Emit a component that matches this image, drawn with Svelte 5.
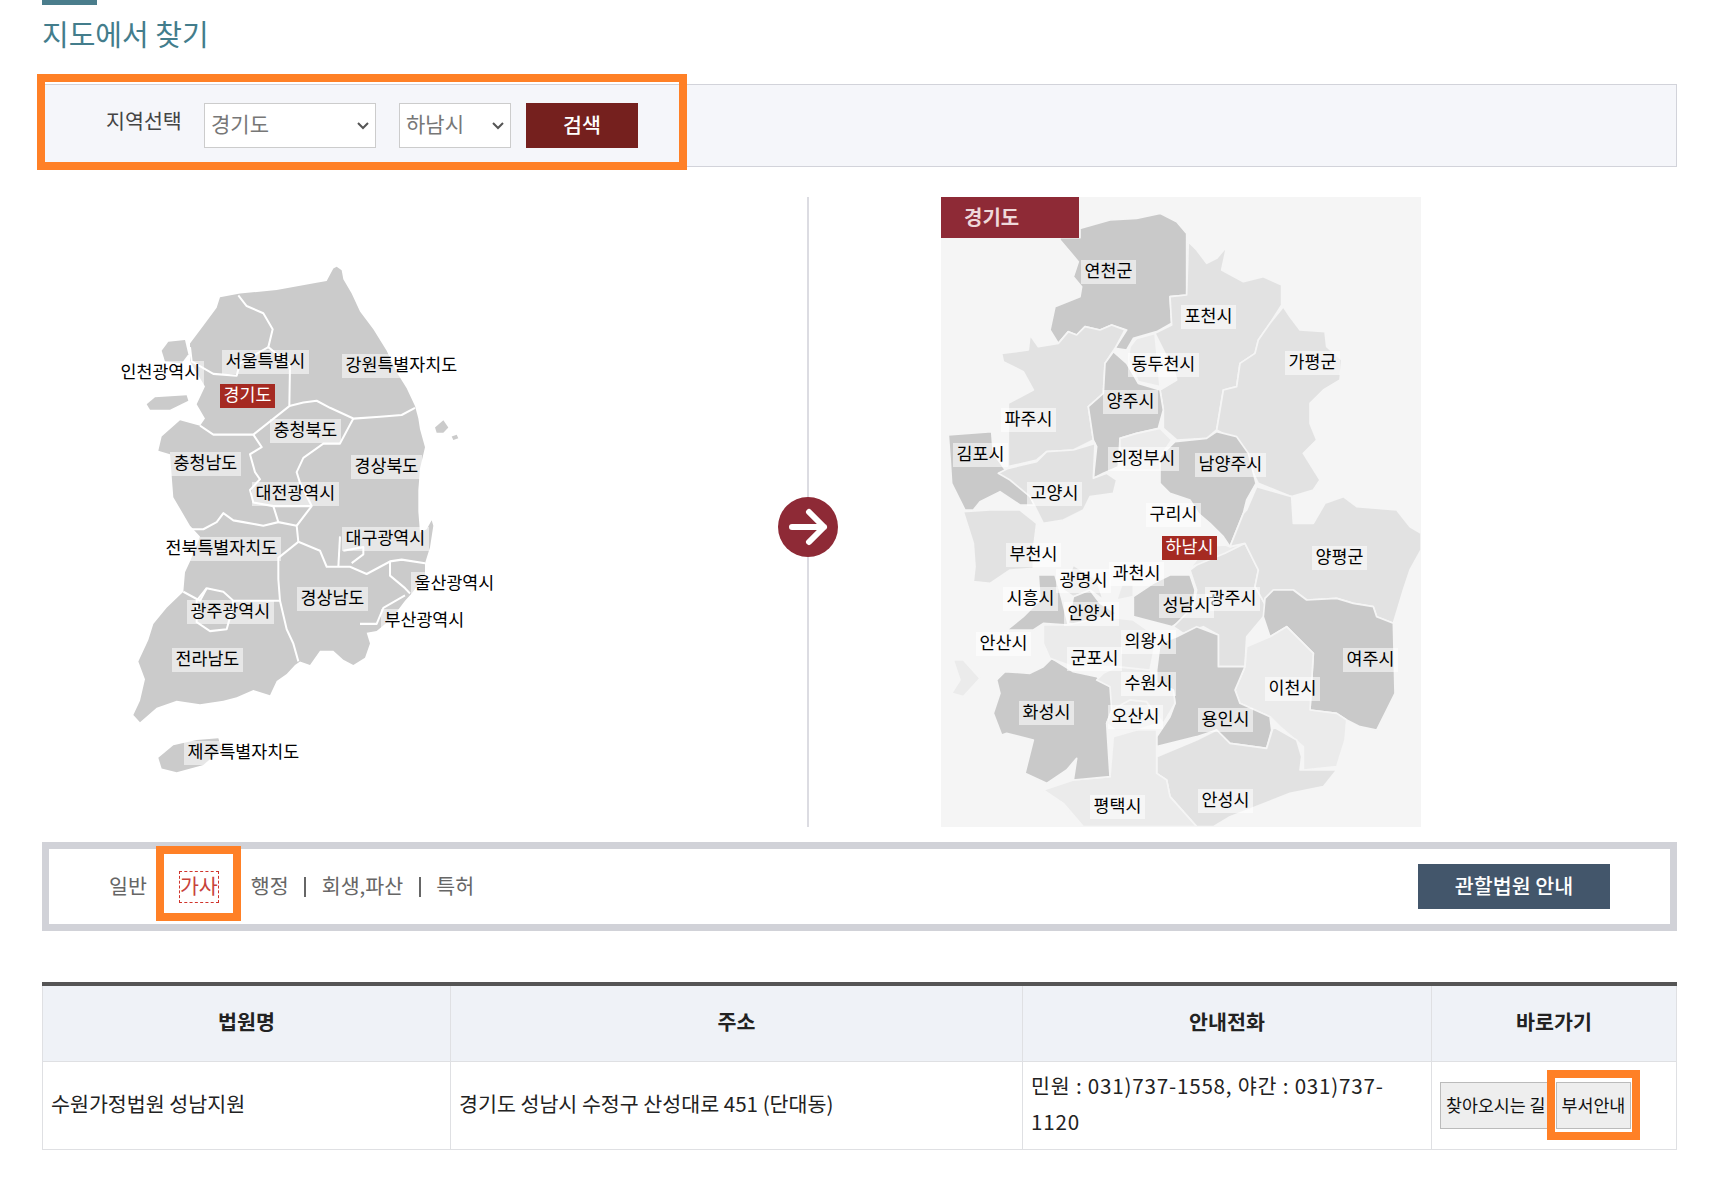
<script>
  const sido = [
    { name: '인천광역시', x: 117, y: 361 },
    { name: '서울특별시', x: 222, y: 350 },
    { name: '강원특별자치도', x: 342, y: 354 },
    { name: '경기도', x: 220, y: 384, on: true },
    { name: '충청북도', x: 270, y: 419 },
    { name: '충청남도', x: 170, y: 452 },
    { name: '경상북도', x: 351, y: 455 },
    { name: '대전광역시', x: 252, y: 482 },
    { name: '대구광역시', x: 342, y: 527 },
    { name: '전북특별자치도', x: 162, y: 537 },
    { name: '울산광역시', x: 411, y: 572 },
    { name: '경상남도', x: 297, y: 587 },
    { name: '광주광역시', x: 187, y: 600 },
    { name: '부산광역시', x: 381, y: 609 },
    { name: '전라남도', x: 172, y: 648 },
    { name: '제주특별자치도', x: 184, y: 741 }
  ]

  const sigungu = [
    { name: '연천군', x: 1081, y: 260 },
    { name: '포천시', x: 1181, y: 305 },
    { name: '동두천시', x: 1128, y: 353 },
    { name: '가평군', x: 1285, y: 351 },
    { name: '양주시', x: 1103, y: 390 },
    { name: '파주시', x: 1001, y: 408 },
    { name: '김포시', x: 953, y: 443 },
    { name: '의정부시', x: 1108, y: 447 },
    { name: '남양주시', x: 1195, y: 453 },
    { name: '고양시', x: 1027, y: 482 },
    { name: '구리시', x: 1146, y: 503 },
    { name: '하남시', x: 1162, y: 536, on: true },
    { name: '부천시', x: 1006, y: 543 },
    { name: '양평군', x: 1312, y: 546 },
    { name: '과천시', x: 1109, y: 562 },
    { name: '광명시', x: 1056, y: 569 },
    { name: '시흥시', x: 1003, y: 587 },
    { name: '광주시', x: 1205, y: 587 },
    { name: '성남시', x: 1159, y: 594 },
    { name: '안양시', x: 1064, y: 602 },
    { name: '안산시', x: 976, y: 632 },
    { name: '의왕시', x: 1121, y: 630 },
    { name: '군포시', x: 1067, y: 647 },
    { name: '여주시', x: 1343, y: 648 },
    { name: '수원시', x: 1121, y: 672 },
    { name: '이천시', x: 1265, y: 677 },
    { name: '화성시', x: 1019, y: 701 },
    { name: '오산시', x: 1108, y: 705 },
    { name: '용인시', x: 1198, y: 708 },
    { name: '평택시', x: 1090, y: 795 },
    { name: '안성시', x: 1198, y: 789 }
  ]

  const dark = '#c9c9c9'
  const mid = '#e2e2e2'
  const soft = '#ebebeb'

  // traced by eye from the reference, y of the lower half offset by 960
  const upper = [
    { fill: dark, p: '390,143 450,143 450,115 540,90 620,85 690,70 740,95 770,130 770,315 720,320 725,400 680,425 610,445 590,480 555,475 590,420 545,405 510,420 465,410 440,435 415,425 385,460 360,420 375,350 450,320 455,290 430,260 445,215 390,150' },
    { fill: mid, p: '775,155 800,180 830,220 860,205 890,170 875,240 940,275 1000,260 1055,285 1055,345 1020,400 985,450 975,490 930,520 920,590 880,600 860,720 830,745 740,750 700,715 700,660 690,600 740,570 735,550 675,430 725,405 720,320 770,315' },
    { fill: soft, p: '600,470 620,445 675,430 690,590 625,575 595,510' },
    { fill: mid, p: '1060,350 1080,380 1110,420 1185,425 1190,470 1235,510 1230,570 1180,600 1140,640 1140,700 1160,750 1120,790 1170,870 1150,900 1085,920 985,880 960,830 930,760 860,720 880,600 920,590 930,520 975,490 985,450 1020,400' },
    { fill: mid, p: '215,490 295,480 300,435 325,470 385,460 415,425 440,435 465,410 510,420 545,405 585,420 555,475 525,520 520,610 475,650 490,750 430,780 350,785 320,810 235,830 235,640 310,600 280,545 220,515' },
    { fill: dark, p: '550,485 590,520 625,580 690,600 700,660 685,715 620,730 570,745 565,830 520,850 490,865 500,770 490,750 475,650 520,610 525,520' },
    { fill: soft, p: '570,745 620,730 690,715 725,750 690,800 690,840 580,840 570,800' },
    { fill: dark, p: '735,755 830,745 860,725 920,740 955,790 978,880 950,930 940,970 900,1070 880,1040 840,1000 805,970 780,930 720,910 690,880 690,800' },
    { fill: dark, p: '55,735 185,725 190,790 230,845 300,900 330,945 270,945 210,905 150,935 130,960 105,960 65,880 60,800' },
    { fill: mid, p: '205,850 235,835 320,815 350,785 430,780 495,760 490,865 530,850 560,870 550,910 480,920 460,960 400,990 340,1000 300,920 240,870' }
  ]

  const lower = [
    { fill: mid, p: '100,5 180,0 270,0 320,40 310,120 310,175 240,180 180,220 130,215 135,170 130,100' },
    { fill: dark, p: '230,360 280,320 330,270 325,195 375,195 395,265 415,345 340,340 310,360' },
    { fill: mid, p: '400,240 430,165 500,210 520,270 480,240 430,260' },
    { fill: dark, p: '430,260 480,240 510,280 560,310 480,350 450,345 415,340' },
    { fill: soft, p: '575,225 610,225 610,260 560,270' },
    { fill: dark, p: '610,260 670,220 720,195 780,195 795,240 790,280 760,330 725,350 610,320' },
    { fill: soft, p: '780,175 830,110 885,105 900,110 945,100 985,180 975,230 900,170 800,165' },
    { fill: mid, p: '800,240 780,180 800,165 885,130 945,100 985,180 975,230 1015,300 1000,320 950,380 945,470 865,470 865,375 820,350 760,370 730,350 790,290' },
    { fill: mid, p: '950,0 980,-70 1085,-40 1090,40 1150,40 1185,-20 1240,-40 1280,-10 1400,0 1440,50 1473,70 1473,120 1440,180 1420,240 1390,340 1340,320 1330,290 1270,280 1220,265 1130,270 1090,240 1030,240 1005,265 1015,300 975,230 985,180 945,100 900,110 940,10' },
    { fill: dark, p: '1005,265 1030,240 1090,240 1130,270 1220,265 1270,280 1330,290 1340,320 1390,340 1395,550 1370,600 1340,660 1290,650 1250,630 1220,610 1140,600 1150,430 1090,370 1070,350 1020,380 1000,320' },
    { fill: soft, p: '950,410 1020,380 1070,350 1090,370 1150,430 1140,600 1220,610 1250,630 1245,690 1220,770 1120,780 1120,710 1050,650 1020,620 930,580 915,540 945,470' },
    { fill: dark, p: '680,480 690,400 740,380 800,350 865,375 865,470 945,470 915,540 930,580 1020,620 1025,660 1010,715 900,700 860,660 800,680 680,710 680,680 720,620 735,580 730,540 680,520' },
    { fill: mid, p: '680,740 800,690 860,660 900,700 1010,715 1030,650 1100,690 1115,740 1110,780 1220,780 1180,830 1080,850 900,920 850,950 800,950 720,860 710,810 680,790' },
    { fill: soft, p: '550,680 620,660 680,660 680,790 710,810 720,860 800,950 460,950 400,880 340,840 430,810 540,800' },
    { fill: dark, p: '200,510 225,485 300,490 340,470 365,445 430,485 500,500 540,530 620,540 665,560 600,570 545,600 530,640 540,800 430,810 440,745 410,780 350,820 285,790 310,690 230,670 215,675 190,610 210,550' },
    { fill: soft, p: '555,580 600,570 650,575 685,640 620,660 555,660 530,640' },
    { fill: soft, p: '660,480 680,520 730,540 735,580 700,640 650,575 600,570 545,600 540,530 500,510 520,490 560,470' },
    { fill: soft, p: '340,345 415,345 520,320 610,330 680,380 660,480 560,470 430,470 360,445 340,400' },
    { fill: soft, p: '70,450 100,450 150,505 100,560 65,550 90,510' }
  ]

  const mainland = '740,75 755,85 760,110 785,150 810,200 850,250 890,310 920,370 950,415 975,465 985,500 990,530 1005,580 990,640 985,700 985,760 990,820 1010,810 1025,785 1030,800 1020,860 1005,905 1005,940 965,990 945,1010 905,1060 860,1095 830,1100 840,1130 825,1170 790,1190 760,1175 730,1150 690,1150 660,1190 630,1180 615,1190 590,1215 560,1235 540,1275 490,1260 440,1280 400,1290 330,1300 260,1290 200,1310 150,1350 130,1330 150,1290 165,1230 145,1180 175,1120 190,1075 230,1030 280,985 285,930 300,900 330,830 300,800 250,720 245,660 240,600 205,590 215,550 270,505 330,520 345,500 320,460 345,410 300,340 300,290 340,240 380,190 390,160 450,150 560,140 680,120 710,115 730,80'

  const islands = [
    '215,310 235,285 285,280 295,320 275,345 225,340',
    '170,460 195,440 290,435 295,450 240,475 180,475',
    '1035,525 1060,505 1075,525 1060,540 1040,540',
    '1085,550 1100,545 1105,555 1090,560',
    '205,1450 250,1415 320,1400 385,1395 395,1425 340,1470 260,1490 215,1480'
  ]

  const borders = [
    '445,155 470,185 520,205 548,250 535,300 600,350 598,465 490,545 420,545 370,545 330,520',
    '598,465 640,455 680,450 720,470 790,500 870,495 935,490 975,470',
    '790,500 750,570 700,570 640,610 620,650 630,680 665,745 620,800 625,845',
    '490,545 515,580 480,600 495,650 510,670 480,700 490,735 550,745 665,745',
    '550,745 565,790 620,800',
    '565,790 520,800 460,790 430,785 400,765 380,790 340,810 300,810',
    '625,845 565,890 565,950 570,1010 590,1090 610,1130 625,1180',
    '625,845 690,870 710,915 780,915 830,935 900,900 935,895 1005,905',
    '750,830 745,915',
    '760,870 820,860 820,880 785,905',
    '900,900 900,940 945,975 960,990',
    '945,995 880,1030 860,1075 810,1075',
    '280,985 330,1010 350,975 400,985 430,1010 520,1010 570,1010',
    '350,975 320,1010 320,1070 360,1095 410,1090 425,1040 430,1010',
    '300,300 305,340 370,375 440,380 450,345 535,300'
  ]

  let sido1 = $state('경기도')
  let sigungu1 = $state('하남시')
</script>

<div class="page">
  <div class="heading">
    <h2>지도에서 찾기</h2>
  </div>

  <div class="filter">
    <span class="filter-label">지역선택</span>
    <select class="sel-sido" bind:value={sido1}>
      <option>서울특별시</option>
      <option>경기도</option>
      <option>강원특별자치도</option>
    </select>
    <select class="sel-sigungu" bind:value={sigungu1}>
      <option>성남시</option>
      <option>하남시</option>
      <option>수원시</option>
    </select>
    <button class="search">검색</button>
    <span class="mark mark-filter"></span>
  </div>

  <div class="maps">
    <div class="left-col">
      <div class="korea">
        <svg viewBox="0 0 1350 1568" preserveAspectRatio="none" aria-hidden="true">
          <polygon points={mainland} fill="#cbcbcb" />
          {#each islands as p}
            <polygon points={p} fill="#cbcbcb" />
          {/each}
          {#each borders as p}
            <polyline points={p} fill="none" stroke="#fff" stroke-width="6" stroke-linejoin="round" />
          {/each}
        </svg>
        {#each sido as s}
          <span class="pin" class:on={s.on} style="left:{s.x - 90}px;top:{s.y - 240}px">{s.name}</span>
        {/each}
      </div>
    </div>

    <div class="divider">
      <svg class="arrow" viewBox="0 0 60 60" aria-hidden="true">
        <circle cx="30" cy="30" r="30" fill="#8e2a36" />
        <path d="M14 30H46M31 15L46 30L31 45" fill="none" stroke="#fff" stroke-width="6" stroke-linecap="round" stroke-linejoin="round" />
      </svg>
    </div>

    <div class="province">
      <svg viewBox="33 21 1440 1890" preserveAspectRatio="none" aria-hidden="true">
        {#each upper as r}
          <polygon points={r.p} fill={r.fill} stroke="#f5f5f5" stroke-width="5" stroke-linejoin="round" />
        {/each}
        <g transform="translate(0 960)">
          {#each lower as r}
            <polygon points={r.p} fill={r.fill} stroke="#f5f5f5" stroke-width="5" stroke-linejoin="round" />
          {/each}
        </g>
      </svg>
      <div class="province-title">경기도</div>
      {#each sigungu as s}
        <span class="pin" class:on={s.on} style="left:{s.x - 941}px;top:{s.y - 197}px">{s.name}</span>
      {/each}
    </div>
  </div>

  <div class="tabs">
    <a href="#일반">일반</a>
    <i></i>
    <span class="tab-current">
      <a href="#가사" class="focused">가사</a>
      <span class="mark mark-tab"></span>
    </span>
    <i></i>
    <a href="#행정">행정</a>
    <i></i>
    <a href="#회생">회생,파산</a>
    <i></i>
    <a href="#특허">특허</a>
    <button class="guide">관할법원 안내</button>
  </div>

  <table>
    <colgroup>
      <col style="width:408px" />
      <col style="width:572px" />
      <col style="width:409px" />
      <col />
    </colgroup>
    <thead>
      <tr>
        <th>법원명</th>
        <th>주소</th>
        <th>안내전화</th>
        <th>바로가기</th>
      </tr>
    </thead>
    <tbody>
      <tr>
        <td>수원가정법원 성남지원</td>
        <td>경기도 성남시 수정구 산성대로 451 (단대동)</td>
        <td class="phone">민원 : 031)737-1558, 야간 : 031)737-<br />1120</td>
        <td>
          <div class="links">
            <button>찾아오시는 길</button>
            <span class="link-current">
              <button>부서안내</button>
              <span class="mark mark-link"></span>
            </span>
          </div>
        </td>
      </tr>
    </tbody>
  </table>
</div>

<style>
  :global(body) {
    margin: 0;
    background: #fff;
    font-family: 'Noto Sans CJK KR', 'Noto Sans', sans-serif;
  }

  .page {
    width: 1635px;
    margin-left: 42px;
    height: 1186px;
  }

  .heading::before {
    content: '';
    display: block;
    width: 55px;
    height: 5px;
    background: #4a7d8c;
  }

  h2 {
    margin: 8px 0 31px;
    font-size: 29px;
    font-weight: 400;
    line-height: 40px;
    color: #437d8c;
  }

  .filter {
    position: relative;
    display: flex;
    align-items: center;
    box-sizing: border-box;
    height: 83px;
    padding-left: 63px;
    background: #f5f6fa;
    border: 1px solid #d2d3da;
  }

  .filter-label {
    width: 75px;
    margin: 0 23px 11px 0;
    font-size: 20.6px;
    line-height: 28px;
    white-space: nowrap;
    color: #444;
  }

  select {
    box-sizing: border-box;
    height: 45px;
    padding: 0 24px 6px 6px;
    background: #fff url("data:image/svg+xml,%3Csvg xmlns='http://www.w3.org/2000/svg' width='12' height='8'%3E%3Cpath d='M1 1l5 5 5-5' fill='none' stroke='%23555' stroke-width='2'/%3E%3C/svg%3E") no-repeat right 6px center;
    border: 1px solid #ccc;
    border-radius: 0;
    appearance: none;
    font: inherit;
    font-size: 21px;
    color: #777;
  }

  .sel-sido {
    width: 172px;
    margin-right: 23px;
  }

  .sel-sigungu {
    width: 112px;
    margin-right: 15px;
  }

  button {
    font-family: inherit;
  }

  .search {
    width: 112px;
    height: 45px;
    padding: 0 0 4px;
    background: #75201e;
    border: 0;
    font-size: 20.6px;
    font-weight: 500;
    color: #fff;
  }

  .mark {
    position: absolute;
    box-sizing: border-box;
    border: 8px solid #ff8026;
    pointer-events: none;
  }

  .mark-filter {
    left: -6px;
    top: -11px;
    width: 650px;
    height: 96px;
  }

  .maps {
    display: flex;
    height: 630px;
    margin-top: 30px;
  }

  .left-col {
    box-sizing: border-box;
    width: 765px;
    padding: 43px 0 0 48px;
  }

  .korea {
    position: relative;
    width: 450px;
    height: 560px;
  }

  .korea svg,
  .province svg {
    display: block;
    width: 100%;
    height: 100%;
    filter: blur(0.5px);
  }

  .divider {
    position: relative;
    width: 2px;
    background: #dcdce2;
  }

  .arrow {
    position: absolute;
    left: -29px;
    top: 300px;
    width: 60px;
    height: 60px;
  }

  .province {
    position: relative;
    width: 480px;
    height: 630px;
    margin-left: 132px;
    background: #f5f5f5;
    overflow: hidden;
  }

  .province-title {
    position: absolute;
    left: 0;
    top: 0;
    box-sizing: border-box;
    width: 138px;
    height: 41px;
    padding-left: 23px;
    background: #8e2a36;
    font-size: 20px;
    font-weight: 700;
    line-height: 40px;
    color: #eed9da;
  }

  .pin {
    position: absolute;
    height: 24px;
    padding: 0 3.5px;
    background: rgba(255, 255, 255, 0.55);
    font-size: 17.33px;
    line-height: 20px;
    white-space: nowrap;
    color: #000;
  }

  .pin.on {
    background: #a52a22;
    color: #fff;
  }

  .tabs {
    display: flex;
    align-items: center;
    box-sizing: border-box;
    height: 89px;
    margin-top: 15px;
    padding-left: 60px;
    border: 7px solid #d1d2d8;
    font-size: 20.6px;
  }

  .tabs a {
    margin-bottom: 4px;
    line-height: 30px;
    color: #666;
    text-decoration: none;
  }

  .tabs i {
    width: 2px;
    height: 20px;
    margin: 0 15.5px;
    background: #666;
  }

  .tab-current {
    position: relative;
    display: flex;
    margin-left: -1px;
    margin-right: -1px;
  }

  .tabs a.focused {
    margin: 0;
    padding: 0 0 4px;
    border: 1px dashed #d0342c;
    line-height: 26px;
    color: #c8423a;
  }

  .mark-tab {
    left: -23px;
    top: -25px;
    width: 85px;
    height: 75px;
  }

  .guide {
    width: 192px;
    height: 45px;
    margin-left: auto;
    margin-right: 60px;
    padding: 0 0 4px;
    background: #43566b;
    border: 0;
    font-size: 20.6px;
    font-weight: 500;
    color: #fff;
  }

  table {
    width: 100%;
    margin-top: 51px;
    table-layout: fixed;
    border-collapse: collapse;
    border-top: 4px solid #555;
  }

  th,
  td {
    box-sizing: border-box;
    border: 1px solid #dfe0e3;
    border-top: 0;
    font-size: 20.6px;
  }

  th {
    height: 77.5px;
    padding-bottom: 6px;
    background: #eff2f7;
    font-weight: 700;
    color: #222;
  }

  td {
    height: 88px;
    padding: 0 8px 6px;
    line-height: 36px;
    color: #222;
  }

  td:last-child {
    padding-bottom: 0;
  }

  td.phone {
    letter-spacing: 0.8px;
  }

  .links {
    display: flex;
    gap: 4px;
  }

  .links button {
    height: 47px;
    padding: 0 5px 3px;
    background: #eee;
    border: 1px solid #bbb;
    font-size: 17.33px;
    white-space: nowrap;
    color: #111;
  }

  .link-current {
    position: relative;
    display: flex;
  }

  .mark-link {
    left: -9px;
    top: -12px;
    width: 93px;
    height: 70px;
  }
</style>
